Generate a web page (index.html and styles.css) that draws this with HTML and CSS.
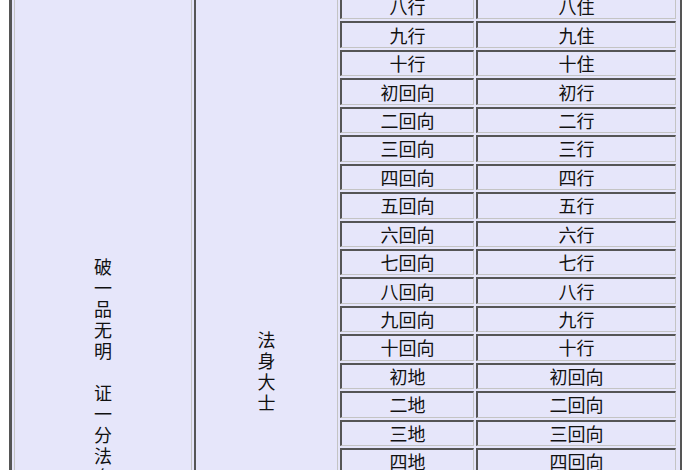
FILE: index.html
```html
<!DOCTYPE html>
<html lang="zh-CN">
<head>
<meta charset="utf-8">
<title>法身大士</title>
<link rel="stylesheet" href="styles.css">
</head>
<body>
<table class="chart">
  <colgroup>
    <col class="c1"><col class="c2"><col class="c3"><col class="c4">
  </colgroup>
  <tbody>
    <tr>
      <td class="tier tier-first" rowspan="23"><span class="vtext">破一品无明　证一分法身</span></td>
      <td class="tier" rowspan="23"><span class="vtext">法身大士</span></td>
      <td>八行</td><td>八住</td>
    </tr>
    <tr><td>九行</td><td>九住</td></tr>
    <tr><td>十行</td><td>十住</td></tr>
    <tr><td>初回向</td><td>初行</td></tr>
    <tr><td>二回向</td><td>二行</td></tr>
    <tr><td>三回向</td><td>三行</td></tr>
    <tr><td>四回向</td><td>四行</td></tr>
    <tr><td>五回向</td><td>五行</td></tr>
    <tr><td>六回向</td><td>六行</td></tr>
    <tr><td>七回向</td><td>七行</td></tr>
    <tr><td>八回向</td><td>八行</td></tr>
    <tr><td>九回向</td><td>九行</td></tr>
    <tr><td>十回向</td><td>十行</td></tr>
    <tr><td>初地</td><td>初回向</td></tr>
    <tr><td>二地</td><td>二回向</td></tr>
    <tr><td>三地</td><td>三回向</td></tr>
    <tr><td>四地</td><td>四回向</td></tr>
    <tr><td>五地</td><td>五回向</td></tr>
    <tr><td>六地</td><td>六回向</td></tr>
    <tr><td>七地</td><td>七回向</td></tr>
    <tr><td>八地</td><td>八回向</td></tr>
    <tr><td>九地</td><td>九回向</td></tr>
    <tr><td>十地</td><td>十回向</td></tr>
  </tbody>
</table>
</body>
</html>
```
FILE: styles.css
```css
html, body {
  margin: 0;
  padding: 0;
  overflow: hidden;
  background: #ffffff;
}

.chart {
  margin: -11px 0 0 9px;
  width: 673px;
  table-layout: fixed;
  border-collapse: separate;
  border-spacing: 2px;
  padding: 0 2px 0 0;
  border-style: solid;
  border-width: 2px 2px 2px 3px;
  border-color: #555555;
  background: #e6e6fa;
  font-family: "Noto Sans CJK SC", "Noto Sans CJK TC", sans-serif;
  font-size: 18px;
  color: #111111;
}

.c1 { width: 178px; }
.c2 { width: 144px; }
.c3 { width: 134px; }
.c4 { width: 200px; }

.chart td {
  background: #e6e6fa;
  padding: 0;
  height: 23.44px;
  line-height: 23px;
  text-align: center;
  vertical-align: middle;
  border-style: solid;
  border-width: 2px 1px 1px 2px;
  border-color: #555555 #c4c4c4 #c4c4c4 #555555;
  white-space: nowrap;
}

.chart td.tier {
  padding-top: 111px;
}

.chart td.tier-first {
  border-left: 1px solid #c4c4c4;
}

.vtext {
  display: inline-block;
  writing-mode: vertical-rl;
  text-orientation: upright;
  letter-spacing: 3px;
  line-height: 18px;
}
```
